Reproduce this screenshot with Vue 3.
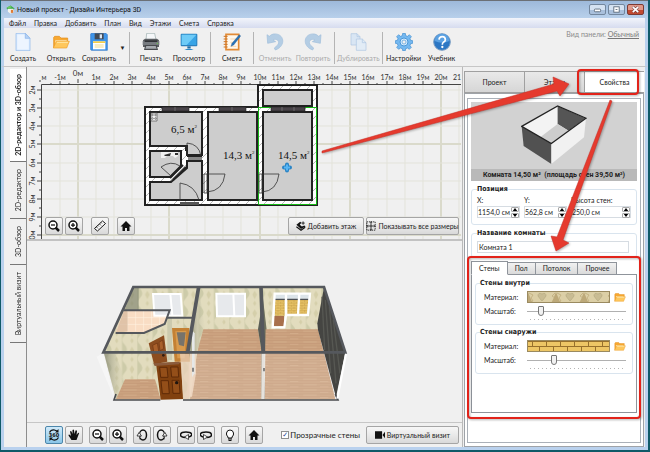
<template>
  <div class="window">
    <header class="titlebar">
      <svg class="app-icon" viewBox="0 0 24 24" aria-hidden="true">
        <path d="M1 8 12 1l11 8-4 4H6z" fill="#35a546" />
        <path d="M5 10h15v9l-8 4-7-5z" fill="#f4f4ee" />
        <path d="M13 13h6v8h-6z" fill="#e07b35" />
        <path d="M2 7l9-5 5 3-9 5z" fill="#6ccc63" />
      </svg>
      <h1>Новый проект - Дизайн Интерьера 3D</h1>
      <div class="window-controls">
        <button type="button" aria-label="Свернуть"><svg viewBox="0 0 16 10"><rect x="4.500" y="4.500" width="7" height="3" rx="1" fill="#fff" stroke="#5a6a7c" /></svg></button>
        <button type="button" aria-label="Развернуть"><svg viewBox="0 0 16 10"><rect x="5" y="2" width="6" height="6" fill="#fff" stroke="#5a6a7c" /><path d="M7 5h2" stroke="#5a6a7c" /></svg></button>
        <button type="button" class="close" aria-label="Закрыть"><svg viewBox="0 0 16 10"><path d="M5 2l6 6M11 2l-6 6" stroke="#6b3030" stroke-width="3" /><path d="M5 2l6 6M11 2l-6 6" stroke="#fff" stroke-width="2" /></svg></button>
      </div>
    </header>

    <nav class="menubar">
      <a v-for="item in menu" :key="item" href="#">{{ item }}</a>
    </nav>

    <div class="toolbar">
      <template v-for="(tool, i) in tools" :key="i">
        <span v-if="tool === '|'" class="separator"></span>
        <button v-else-if="tool === 'v'" type="button" class="drop" aria-label="Варианты сохранения">▼</button>
        <button v-else type="button" class="tool" :disabled="tool.off">
          <svg viewBox="0 0 54 54" v-html="icons[tool.icon]"></svg>
          <span>{{ tool.label }}</span>
        </button>
      </template>
      <p class="panel-mode">Вид панели: <a href="#">Обычный</a></p>
    </div>

    <div class="body">
      <div class="side-tabs">
        <button
          v-for="tab in sideTabs"
          :key="tab"
          type="button"
          :class="{ active: tab === view }"
          @click="view = tab"
        ><span>{{ tab }}</span></button>
      </div>

      <main class="work">
        <section class="plan">
          <svg class="plan-canvas">
            <defs>
              <pattern id="hatch" width="9" height="9" patternUnits="userSpaceOnUse">
                <rect width="9" height="9" fill="#fff" />
                <path d="M0 9L9 0" stroke="#999" stroke-width=".7" />
              </pattern>
            </defs>
            <g transform="translate(-27 -67)">
              <g v-for="n in 24" :key="'x' + n">
                <path :d="`M${xAt(n - 2)} 85V239`" :stroke="gridColor(n - 2)" :stroke-width="gridWidth(n - 2)" />
              </g>
              <g v-for="n in 9" :key="'y' + n">
                <path :d="`M42 ${yAt(n + 1)}H461`" :stroke="gridColor(n + 1)" :stroke-width="gridWidth(n + 1)" />
              </g>
              <path d="M41.500 239V84.500H461" fill="none" stroke="#444" />
              <g class="ruler">
                <text x="44" y="80" text-anchor="middle">м</text>
                <template v-for="n in 22" :key="'rx' + n">
                  <text v-if="n !== 2" :x="xAt(n - 2)" y="80" text-anchor="middle">{{ n - 2 }}м</text>
                  <text v-else class="zero" :x="xAt(0)" y="76" text-anchor="middle">0м</text>
                  <path :d="`M${xAt(n - 2)} ${n === 2 ? 79 : 81}v4M${xAt(n - 2.5)} 83v2`" stroke="#444" />
                </template>
                <text x="461" y="80" text-anchor="end">21</text>
                <template v-for="n in 9" :key="'ry' + n">
                  <text :transform="`translate(35 ${yAt(n + 1)}) rotate(-90)`" text-anchor="middle">{{ n === 9 ? '0' : n + 1 }}м</text>
                  <path :d="`M37 ${yAt(n + 1)}h4M39 ${yAt(n + 0.5)}h2`" stroke="#444" />
                </template>
              </g>

              <!-- walls -->
              <path d="M145 107H258V85H317V205H145z" fill="url(#hatch)" stroke="#222" stroke-width="2" />
              <g fill="#cdcdcd" stroke="#222" stroke-width="2">
                <path d="M150 112H202V155H187V146H150z" />
                <path d="M208 112H257V200H208z" />
                <path d="M263 112H312V200H263z" />
                <path d="M263 90H312V106H263z" />
                <path d="M150 151H181V166L170 177H150z" />
                <path d="M150 182H171L187 168V161H202V200H150z" />
              </g>
              <path d="M150 146H186V151M187 156H202" stroke="#222" stroke-width="2" fill="none" />
              <path d="M188 157H202V160H188z" fill="#888" />
              <path d="M170 178L183 165M173 180L186 167" stroke="#222" stroke-width="2" />
              <path d="M258.500 107.500H316.500V204.500H258.500z" fill="none" stroke="#16b816" />
              <path d="M162 107H189V111H162zM219 107H246V111H219zM271 107H305V111H271z" fill="#494449" stroke="#222" stroke-width=".6" />
              <path d="M175 107v4M232 107v4M282 107v4M294 107v4" stroke="#888" stroke-width=".6" />
              <path d="M180 202h19v3h-19z" fill="#555" />
              <g fill="#f1f1f1" stroke="#555" stroke-width=".7">
                <path d="M151 113h6v8h-6z" />
                <circle cx="152.500" cy="115" r=".8" /><circle cx="155.500" cy="115" r=".8" />
                <circle cx="152.500" cy="118.500" r=".8" /><circle cx="155.500" cy="118.500" r=".8" />
              </g>
              <path d="M161 152h17v4l-3 2-2-2h-6l-2 2h-4z" fill="#f2f2f2" />
              <path d="M164 155l7-2-1 3h-5zM175 153h3v2h-3z" fill="#333" />
              <g fill="none" stroke="#333" stroke-width=".8">
                <path d="M187 156V143Q199 144 201 156" />
                <path d="M171 176L161 167Q171 160 180 166" />
                <path d="M180 201V183Q195 185 199 200" />
                <path d="M204 174H225Q223 191 207 192M204 174V193H207V174" />
                <path d="M259 174H279Q277 191 262 192M259 174V193H262V174" />
              </g>
              <g class="area">
                <text x="171" y="133">6,5 м<tspan class="sup" dy="-5">2</tspan></text>
                <text x="223" y="159">14,3 м<tspan class="sup" dy="-5">2</tspan></text>
                <text x="278" y="159">14,5 м<tspan class="sup" dy="-5">2</tspan></text>
              </g>
              <path d="M284 167.500h6M287 164.500v6" stroke="#2a85c6" stroke-width="4" stroke-linecap="round" />
              <path d="M284 167.500h6M287 164.500v6" stroke="#58b6f4" stroke-width="2" />
            </g>
          </svg>
          <div class="plan-tools">
            <button type="button" class="sq" aria-label="Уменьшить"><svg viewBox="0 0 24 24" v-html="glyphs.minus"></svg></button>
            <button type="button" class="sq" aria-label="Увеличить"><svg viewBox="0 0 24 24" v-html="glyphs.plus"></svg></button>
            <button type="button" class="sq gap" aria-label="Линейка"><svg viewBox="0 0 24 24" v-html="glyphs.ruler"></svg></button>
            <button type="button" class="sq gap" aria-label="Показать весь план"><svg viewBox="0 0 24 24" v-html="glyphs.home"></svg></button>
            <span class="grow"></span>
            <button type="button" class="wide floor"><svg viewBox="0 0 24 24" v-html="glyphs.layers"></svg>Добавить этаж</button>
            <button type="button" class="wide"><svg viewBox="0 0 24 24" v-html="glyphs.sizes"></svg>Показывать все размеры</button>
          </div>
        </section>

        <section class="view3d">
          <svg viewBox="0 0 810 420" role="img" aria-label="3D-обзор">
            <defs>
              <pattern id="paper" width="46" height="56" patternUnits="userSpaceOnUse">
                <rect width="46" height="56" fill="#e2dcbe" />
                <path d="M12 0q14 14 0 28q-14 14 0 28h-8V0z" fill="#cdcba9" />
                <path d="M34 6l7 12-7 14-7-14zM34 36l5 8-5 8-5-8z" fill="#d5cfaa" />
              </pattern>
              <pattern id="floor" width="90" height="16" patternUnits="userSpaceOnUse">
                <rect width="90" height="16" fill="#cba27f" />
                <path d="M0 4h90M0 12h90" stroke="#bf9473" stroke-width="1.500" />
                <path d="M10 8h40M60 15h25" stroke="#d8b391" stroke-width="2" />
              </pattern>
              <pattern id="bricks3d" width="16" height="10" patternUnits="userSpaceOnUse">
                <rect width="16" height="10" fill="#e9c467" />
                <path d="M0 1h16M0 6h16M4 1v5M12 6v5" stroke="#b28a3a" />
              </pattern>
              <linearGradient id="shade" x1="0" x2="1">
                <stop offset="0" stop-color="#777b68" stop-opacity=".7" />
                <stop offset="1" stop-color="#d8d6b8" stop-opacity=".1" />
              </linearGradient>
            </defs>
            <path d="M40 250L75 390 20 260zM768 250L742 388 752 250z" fill="#f6f6f6" />
            <!-- back walls -->
            <path d="M130 50H702L684 180 730 388H78L42 250z" fill="url(#paper)" />
            <path d="M130 50L146 50V120H104z" fill="#777b68" opacity=".6" />
            <path d="M326 52L346 180 318 250V360L296 245z" fill="url(#shade)" />
            <path d="M515 52L530 180V245H515z" fill="#6f725f" />
            <path d="M42 250H76L105 330 78 388z" fill="url(#shade)" />
            <!-- floors -->
            <path d="M340 178H504L515 245V388H300L322 245z" fill="url(#floor)" />
            <path d="M527 178H684L736 388H522z" fill="url(#floor)" />
            <path d="M105 328H195L212 388H78z" fill="url(#floor)" />
            <path d="M318 248H520V388H296zM524 248H700L736 388H524z" fill="#fff" opacity=".14" />
            <path d="M504 178L515 245V388H524V200L515 110z" fill="#595d55" />
            <path d="M515 250h11l-2 138h-10z" fill="#f4f1ec" opacity=".9" />
            <path d="M300 250h18v60l-12 70h-16z" fill="#efd9c5" opacity=".9" />
            <path d="M306 180l8 10v120l-8 12z" fill="#e6e8e8" />
            <path d="M702 52L766 246 738 382 684 180 682 160z" fill="#454542" />
            <path d="M706 90L722 310M718 110L738 340M730 150L750 310M696 80L704 240" stroke="#575853" stroke-width="4" />
            <!-- bathroom -->
            <path d="M102 122H236L222 160 162 188H76z" fill="#f9ddc4" />
            <path d="M113 122V184M137 122V184M161 122V184M185 122V175M209 122V165M98 143H228M90 163H216" stroke="#fff0df" stroke-width="2" />
            <path d="M77 190L102 122L113 124V184z" fill="#d6b89d" opacity=".7" />
            <path d="M162 190L224 161 232 250H178z" fill="url(#paper)" />
            <path d="M232 145H246V270H232z" fill="#cccaae" />
            <!-- windows -->
            <g fill="#e7e9ec" stroke="#fff" stroke-width="6">
              <path d="M189 72H272L277 137H193zM241 72L247 137" />
              <path d="M379 71H465V139H381zM430 71L433 139" />
            </g>
            <path d="M555 85H584V137H555zM592 90H655L650 133H592z" fill="url(#bricks3d)" />
            <path d="M555 72H658V88H555z" fill="#dce4e9" />
            <path d="M555 88H655" stroke="#4b4f55" stroke-width="4" />
            <path d="M552 138H582V168H550z" fill="#a8704c" />
            <path d="M554 71H660L654 135H588L583 172H548zM588 71V137M628 71L624 135" fill="none" stroke="#fff" stroke-width="7" />
            <!-- doors -->
            <path d="M176 220L222 196 232 275 192 283z" fill="#8c4d1f" />
            <path d="M188 226L202 219 206 243 192 249zM207 217L218 210 221 236 210 242z" fill="#a9602a" stroke="#6f3512" stroke-width="2" />
            <circle cx="220" cy="256" r="4" fill="#2f1d12" />
            <path d="M246 174H298V275H254z" fill="#c48134" />
            <path d="M256 184L289 182 284 265H262z" fill="#d99b4d" />
            <path d="M260 187H287L282 229 267 225z" fill="#77736b" />
            <path d="M198 279L273 277 279 387 212 389z" fill="#81410f" />
            <path d="M190 280L268 275V283L194 288z" fill="#8b5b3b" />
            <g fill="#944f19" stroke="#5f2b08" stroke-width="3">
              <path d="M209 292h22l3 30h-22zM242 291h22l2 30h-21zM213 332h22l3 39h-21zM246 331h21l3 39h-21z" />
            </g>
            <circle cx="260" cy="338" r="5" fill="#1e1510" />
            <path d="M270 252H298V388H280z" fill="#ead2bb" opacity=".75" />
            <!-- wall tops -->
            <g fill="none" stroke="#55585d" stroke-width="8">
              <path d="M130 51H702L766 247H40z" />
              <path d="M326 51L293 247M513 51L520 247" stroke-width="11" />
              <path d="M102 121H239L224 162 162 189H77M233 143H306" stroke-width="6" />
            </g>
            <path d="M78 372L72 390H211M279 390H744L736 372" fill="none" stroke="#494b4e" stroke-width="5" />
            <path d="M768 252L742 386" stroke="#fff" stroke-width="6" />
            <path d="M309 293v12M522 294v10" stroke="#555" stroke-width="4" />
          </svg>
        </section>

        <div class="view-tools">
          <button type="button" class="sq on" aria-label="Вращать"><svg viewBox="0 0 24 24" v-html="glyphs.r360"></svg></button>
          <button type="button" class="sq" aria-label="Перемещать"><svg viewBox="0 0 24 24" v-html="glyphs.hand"></svg></button>
          <template v-for="g in viewGlyphs" :key="g.name">
            <button type="button" class="sq" :class="{ gap: g.gap }" :aria-label="g.label"><svg viewBox="0 0 24 24" v-html="glyphs[g.name]"></svg></button>
          </template>
          <span class="grow"></span>
          <label class="check"><input v-model="transparent" type="checkbox" />Прозрачные стены</label>
          <button type="button" class="wide"><svg viewBox="0 0 24 24" v-html="glyphs.camera"></svg>Виртуальный визит</button>
        </div>
      </main>

      <aside class="props">
        <div class="tabs">
          <button v-for="tab in panelTabs" :key="tab" type="button" :class="{ active: tab === panelTab }" @click="panelTab = tab">{{ tab }}</button>
        </div>
        <div class="frame">
          <div class="inner">
            <div class="preview">
              <svg viewBox="0 0 200 180" aria-hidden="true">
                <path d="M2 64L111 0 197 38 92 116z" fill="#f3f3f3" />
                <path d="M111 2L196 40 144 77 111 57z" fill="#555" />
                <path d="M111 57L144 77 92 114 59 96z" fill="#cdcdcd" />
                <path d="M2 64L92 116V178L8 123z" fill="#515151" />
                <path d="M92 116L197 38 191 97 92 178z" fill="#f1f1f1" />
                <path d="M2 64L111 2 197 39 92 116z" fill="none" stroke="#222" stroke-width="4" />
              </svg>
              <strong>Комната 14,50 м²&nbsp; (площадь стен 39,50 м²)</strong>
            </div>

            <fieldset class="position">
              <legend>Позиция</legend>
              <div class="fields">
                <div v-for="f in fields" :key="f.id" class="field">
                  <label :for="f.id">{{ f.label }}</label>
                  <div class="spin">
                    <input :id="f.id" v-model="f.value" type="text" />
                    <div class="steps">
                      <button type="button" aria-label="Больше"><svg viewBox="0 0 8 4"><path d="M4 0l3 4H1z" /></svg></button>
                      <button type="button" aria-label="Меньше"><svg viewBox="0 0 8 4"><path d="M4 4L1 0h6z" /></svg></button>
                    </div>
                  </div>
                </div>
              </div>
            </fieldset>

            <fieldset class="name">
              <legend><label for="room-name">Название комнаты</label></legend>
              <input id="room-name" v-model="roomName" type="text" />
            </fieldset>

            <div class="subtabs">
              <button v-for="tab in surfaceTabs" :key="tab" type="button" :class="{ active: tab === surface }" @click="surface = tab">{{ tab }}</button>
            </div>
            <div class="subpage">
              <fieldset v-for="wall in walls" :key="wall.id">
                <legend>{{ wall.title }}</legend>
                <div class="row">
                  <span class="caption">Материал:</span>
                  <svg class="swatch">
                    <defs>
                      <pattern id="damask" width="28" height="12" patternUnits="userSpaceOnUse">
                        <rect width="28" height="12" fill="#dccfa6" />
                        <path d="M1 1l4 2-2 3 2 3-4 2M27 1l-3 3 3 2-3 4 3 1" fill="none" stroke="#c5b384" />
                        <path d="M14 2q4-2 4 2q-2 3-4 5q-2-2-4-5q0-4 4-2" fill="#c9bc93" stroke="#b4a980" stroke-width=".7" />
                        <path d="M0 0l4 10h-4zM28 0l-4 10h4z" fill="#bda979" />
                      </pattern>
                      <pattern id="brick" width="14" height="12" patternUnits="userSpaceOnUse">
                        <rect width="14" height="12" fill="#edc665" />
                        <path d="M0 .5h14M0 5.500h14M0 10.500h14M4.500 1v5M11.500 6v5" stroke="#96702c" />
                      </pattern>
                    </defs>
                    <rect width="100%" height="100%" :fill="`url(#${wall.fill})`" />
                  </svg>
                  <button type="button" class="folder" aria-label="Выбрать материал">
                    <svg viewBox="3 8 50 40" v-html="icons.open"></svg>
                  </button>
                </div>
                <div class="row">
                  <label class="caption" :for="wall.id">Масштаб:</label>
                  <div class="slider">
                    <input :id="wall.id" v-model="wall.scale" type="range" min="0" max="100" />
                    <span class="ticks"></span>
                  </div>
                </div>
              </fieldset>
            </div>
          </div>
        </div>
      </aside>
    </div>

    <svg class="marks" viewBox="0 0 650 452" preserveAspectRatio="none" aria-hidden="true">
      <g fill="none" stroke="#e2231a" stroke-width="2">
        <rect x="578" y="70" width="60" height="24" rx="3" />
        <rect x="468" y="257" width="172" height="161" rx="3" />
      </g>
      <g fill="#e53a2e" stroke="#c92b22" stroke-width=".5">
        <path d="M322 151L554 84 553 77 569 84 560 96 557 91 322 153z" />
        <path d="M610 100L557 237 551 236 556 251 569 243 563 240 612 101z" />
      </g>
    </svg>
  </div>
</template>

<script setup>
import { ref } from 'vue'

const menu = ['Файл', 'Правка', 'Добавить', 'План', 'Вид', 'Этажи', 'Смета', 'Справка']

const tools = [
  { icon: 'page', label: 'Создать' },
  { icon: 'open', label: 'Открыть' },
  { icon: 'save', label: 'Сохранить' },
  'v',
  '|',
  { icon: 'print', label: 'Печать' },
  { icon: 'screen', label: 'Просмотр' },
  '|',
  { icon: 'estimate', label: 'Смета' },
  '|',
  { icon: 'undo', label: 'Отменить', off: true },
  { icon: 'redo', label: 'Повторить', off: true },
  '|',
  { icon: 'copy', label: 'Дублировать', off: true },
  '|',
  { icon: 'gear', label: 'Настройки' },
  { icon: 'help', label: 'Учебник' }
]

const sideTabs = ['2D-редактор и 3D-обзор', '2D-редактор', '3D-обзор', 'Виртуальный визит']
const view = ref(sideTabs[0])

const panelTabs = ['Проект', 'Этажи', 'Свойства']
const panelTab = ref('Свойства')

const surfaceTabs = ['Стены', 'Пол', 'Потолок', 'Прочее']
const surface = ref('Стены')

const fields = ref([
  { id: 'pos-x', label: 'X:', value: '1154,0 см' },
  { id: 'pos-y', label: 'Y:', value: '562,8 см' },
  { id: 'height', label: 'Высота стен:', value: '250,0 см' }
])
const roomName = ref('Комната 1')
const transparent = ref(true)

const walls = ref([
  { id: 'scale-in', title: 'Стены внутри', fill: 'damask', scale: 12 },
  { id: 'scale-out', title: 'Стены снаружи', fill: 'brick', scale: 26 }
])

const viewGlyphs = [
  { name: 'minus', label: 'Уменьшить', gap: true },
  { name: 'plus', label: 'Увеличить' },
  { name: 'tiltL', label: 'Наклонить назад', gap: true },
  { name: 'tiltR', label: 'Наклонить вперёд' },
  { name: 'turnL', label: 'Повернуть влево', gap: true },
  { name: 'turnR', label: 'Повернуть вправо' },
  { name: 'bulb', label: 'Освещение', gap: true },
  { name: 'home', label: 'Исходный вид', gap: true }
]

// metres to canvas pixels
const xAt = (m) => Math.round(78 + m * 18.15)
const yAt = (m) => Math.round(90 + (m - 2) * 18.15)
const gridColor = (m) => (m % 5 ? '#e3e3da' : '#dadacb')
const gridWidth = (m) => (m % 5 ? 1 : 2)

const icons = {
  page: '<path d="M6 1h28l14 15v37H6z" fill="#dcecff" stroke="#8db5e8" stroke-width="2"/><path d="M10 5h22v14h12v30H10z" fill="#edf5ff"/><path d="M34 1v15h14z" fill="#b5d2f6" stroke="#8db5e8" stroke-width="2"/>',
  open: '<path d="M5 44V13l3-3h14l5 5h20v10" fill="#f7a831" stroke="#e38b18" stroke-width="2"/><path d="M10 22h34v14H10z" fill="#fff3d0"/><path d="M4 45l9-20h39l-8 20z" fill="#ffc75c" stroke="#ee9d25" stroke-width="2"/><path d="M15 28h33" stroke="#ffe7a8" stroke-width="3"/>',
  save: '<path d="M2 4q0-3 3-3h43l4 4v47H5q-3 0-3-3z" fill="#3f95ea" stroke="#2c74c8" stroke-width="2"/><path d="M14 1h27v18H14z" fill="#444b55"/><path d="M29 4h7v12h-7z" fill="#dbe6f2"/><path d="M9 25h37v24H9z" fill="#fff"/><path d="M9 25h37v5H9z" fill="#f5cf48"/><path d="M14 36h27M14 42h27" stroke="#f1dc8a" stroke-width="3"/>',
  print: '<path d="M14 1h24l4 20H12z" fill="#f5f7f9" stroke="#9aa" stroke-width="2"/><path d="M3 22l6-5h36l6 5v20H3z" fill="#5a5d61"/><path d="M2 24h50v12H2z" fill="#777b80"/><path d="M8 22h38v5H8z" fill="#303236"/><path d="M10 36h34l4 15H6z" fill="#47494d"/><path d="M13 39h28l3 8H10z" fill="#a7abb0"/><circle cx="46" cy="31" r="2" fill="#6fd04c"/>',
  screen: '<rect x="2" y="2" width="50" height="38" rx="3" fill="#2b80bd"/><path d="M5 5h44v31H5z" fill="#38a4e6"/><path d="M5 5h44L20 36H5z" fill="#6ecbf7"/><path d="M22 40h10v6H22z" fill="#276fa3"/><path d="M13 51q14-9 28 0z" fill="#2b87c7"/>',
  estimate: '<path d="M9 4h38v46H9z" fill="#fff8ec" stroke="#e28a35" stroke-width="5"/><path d="M2 10h12M2 18h12M2 26h12M2 34h12M2 42h12" stroke="#cc7527" stroke-width="3"/><path d="M22 18h18M22 28h8M22 40h18" stroke="#f0c99c" stroke-width="2"/><path d="M49 5l4 4-21 27-8 4 3-9z" fill="#2973b8" stroke="#194f86"/>',
  undo: '<path d="M3 5l2 26 24-5-8-5c12-7 23 6 13 16l-9 8 3 6c34-12 27-52-6-48-5 1-9 4-12 7z" fill="#84b2dc" stroke="#5d94c8" stroke-width="2"/>',
  redo: '<path d="M51 5l-2 26-24-5 8-5c-12-7-23 6-13 16l9 8-3 6C-8 39-1-1 32 3c5 1 9 4 12 7z" fill="#84b2dc" stroke="#5d94c8" stroke-width="2"/>',
  copy: '<path d="M6 2h18l9 9v25H6z" fill="#c8dff8" stroke="#76a5d8" stroke-width="2"/><path d="M22 18h18l11 11v23H22z" fill="#d8e9fb" stroke="#76a5d8" stroke-width="2"/><path d="M24 2v9h9M40 18v11h11" fill="none" stroke="#76a5d8" stroke-width="2"/>',
  gear: '<path d="M23 1h8l1 7 6 2 5-5 6 6-4 6 2 5 6 1v8l-6 1-2 6 4 5-6 6-5-4-6 2-1 6h-8l-1-6-6-2-5 4-6-6 4-5-2-6-6-1v-8l6-1 2-5-4-6 6-6 5 5 6-2z" fill="#74b8f0" stroke="#3e8cd0" stroke-width="2"/><circle cx="27" cy="27" r="12" fill="#d7ecfd" stroke="#4a97d8" stroke-width="3"/><circle cx="27" cy="27" r="6" fill="#f0f0f0" stroke="#4a97d8" stroke-width="2"/>',
  help: '<circle cx="27" cy="27" r="25" fill="#2c77c4" stroke="#7b9ec3" stroke-width="3"/><path d="M5 24a22 22 0 0 1 44 0q-22 10-44 0z" fill="#5ba1e2"/><path d="M18 20q1-9 10-9t9 9q0 5-6 8-3 2-3 7" fill="none" stroke="#fff" stroke-width="5"/><circle cx="28" cy="42" r="3.500" fill="#fff"/>'
}

const loupe = '<circle cx="10" cy="10" r="8" fill="#fff" stroke="#111" stroke-width="3"/><path d="M15 15l7 7" stroke="#111" stroke-width="5"/>'
const glyphs = {
  minus: loupe + '<path d="M6 10h8" stroke="#111" stroke-width="2.500"/>',
  plus: loupe + '<path d="M6 10h8M10 6v8" stroke="#111" stroke-width="2.500"/>',
  ruler: '<path d="M1 17L17 2l6 5L7 22z" fill="#fff" stroke="#111" stroke-width="2"/><path d="M5 14l3 3M8 11l2 2M11 8l3 3M14 5l2 2" stroke="#111" stroke-width="1.500"/>',
  home: '<path d="M12 2l11 11h-4v9h-5v-6h-4v6H5v-9H1z" fill="#111"/>',
  layers: '<path d="M1 9l9-7 3 2-4 5 5 4 6-2 3 2-11 6z" fill="#111"/><path d="M1 14l11 8 10-7" fill="none" stroke="#111" stroke-width="3"/><path d="M17 1v8M13 5h8" stroke="#111" stroke-width="2"/>',
  sizes: '<path d="M2 2h20v20H2z" fill="none" stroke="#111" stroke-width="2" stroke-dasharray="3 2"/><path d="M12 1v22M1 12h22" stroke="#111" stroke-width="2"/><path d="M9 5l3-3 3 3M9 19l3 3 3-3M5 9l-3 3 3 3M19 9l3 3-3 3" fill="none" stroke="#111"/>',
  r360: '<path d="M3 7q3-6 10-5l5 2M21 17q-3 6-10 5l-5-2" fill="none" stroke="#111" stroke-width="2.500"/><path d="M21 0v7h-7zM3 24v-7h7z" fill="#111"/><text x="12" y="16" text-anchor="middle" font-family="DejaVu Sans Condensed, sans-serif" font-size="11" font-weight="bold" fill="#111">360</text>',
  hand: '<path d="M7 22l-6-9q0-3 3-1l2 2L4 5q2-2 3 0l2 5V2q2-2 3 0l1 8 2-7q2-1 3 1l-1 8 3-4q3-1 2 1l-5 13z" fill="#111"/>',
  tiltL: '<ellipse cx="14" cy="12" rx="7" ry="10" fill="none" stroke="#111" stroke-width="3"/><path d="M8 7q-3 6 1 11" fill="none" stroke="#fff" stroke-width="2"/><path d="M2 14h9l-5-7zM8 14v7" fill="#fff" stroke="#111" stroke-width="1.500"/>',
  tiltR: '<ellipse cx="10" cy="12" rx="7" ry="10" fill="none" stroke="#111" stroke-width="3"/><path d="M16 7q3 6-1 11" fill="none" stroke="#fff" stroke-width="2"/><path d="M22 14h-9l5-7zM16 14v7" fill="#fff" stroke="#111" stroke-width="1.500"/>',
  turnL: '<path d="M11 17c-14 0-13-11 1-11s14 8 6 10" fill="none" stroke="#111" stroke-width="3"/><path d="M17 11v10l-8-5z" fill="#fff" stroke="#111" stroke-width="1.500"/>',
  turnR: '<path d="M13 17c14 0 13-11-1-11s-14 8-6 10" fill="none" stroke="#111" stroke-width="3"/><path d="M7 11v10l8-5z" fill="#fff" stroke="#111" stroke-width="1.500"/>',
  bulb: '<path d="M8 16q-4-4-3-8 1-6 7-6t7 6q1 4-3 8v2H8z" fill="#fff" stroke="#111" stroke-width="2"/><path d="M8 20h8M9 23h6" stroke="#111" stroke-width="2"/>',
  camera: '<path d="M0 3h17v18H0zM18 12l6-8v16z" fill="#111"/>'
}
</script>

<style>
body {
  margin: 0;
}
</style>

<style scoped>
.window,
.window * {
  box-sizing: border-box;
}

.window {
  position: relative;
  display: flex;
  flex-direction: column;
  min-height: 100vh;
  padding: 0 2px 2px 1px;
  background: #0f5a68;
  color: #222;
  font: 7px/9px Lato, "Liberation Sans", sans-serif;
}

button,
input {
  margin: 0;
  padding: 0;
  border: 0;
  background: none;
  color: inherit;
  font: inherit;
}

svg {
  display: block;
}

.titlebar {
  display: flex;
  align-items: center;
  height: 18px;
  padding: 0 4px 0 5px;
  border-top: 1px solid #6b7076;
  background: linear-gradient(#9db9da, #b8d0eb);
}

.app-icon {
  width: 9px;
  height: 9px;
}

h1 {
  flex: 1;
  margin: 0 0 0 2px;
  color: #111;
  font: 7px/10px Roboto, "Liberation Sans", sans-serif;
}

.window-controls {
  display: flex;
  gap: 2px;
}

.window-controls button {
  width: 17px;
  height: 11px;
  border: 1px solid #73879e;
  border-radius: 2px;
  background: linear-gradient(#d5e2f1 50%, #a9c0dc 50%);
}

.window-controls svg {
  width: 100%;
  height: 9px;
}

.window-controls .close {
  border-color: #7c3a33;
  background: linear-gradient(#e0998a 50%, #c14a31 50%);
}

.menubar {
  display: flex;
  gap: 8px;
  height: 10px;
  padding: 0 5px;
  border-right: 3px solid #b9d1ee;
  border-left: 3px solid #b9d1ee;
  background: linear-gradient(#f2f5fb, #d6dcef);
  line-height: 10px;
}

.menubar a {
  color: #222;
  text-decoration: none;
}

.toolbar {
  display: flex;
  height: 39px;
  border-left: 3px solid #b9d1ee;
  border-right: 3px solid #b9d1ee;
  border-bottom: 1px solid #c6c6c6;
  background: #f0f0f0;
}

.tool {
  display: flex;
  flex-direction: column;
  align-items: center;
  min-width: 38px;
  padding-top: 5px;
  white-space: nowrap;
}

.tool svg {
  width: 18px;
  height: 18px;
  margin-bottom: 3px;
}

.tool:disabled {
  color: #aaa;
}

.tool:disabled svg {
  opacity: 0.55;
}

.drop {
  width: 9px;
  font-size: 6px;
}

.separator {
  width: 1px;
  margin: 4px 2px 2px;
  background: #b4b4b4;
}

.panel-mode {
  margin: 2px 6px 0 auto;
  color: #8a8a8a;
}

.panel-mode a {
  color: #777;
}

.body {
  flex: 1;
  display: flex;
  border: 3px solid #b9d1ee;
  border-top: 0;
  background: #f0f0f0;
}

.side-tabs {
  display: flex;
  flex-direction: column;
  width: 23px;
  padding: 2px 0 0 6px;
  border-right: 1px solid #8d8d8d;
}

.side-tabs button {
  display: flex;
  align-items: center;
  justify-content: center;
  padding: 7px 0;
  border-bottom: 1px solid #777;
}

.side-tabs span {
  writing-mode: vertical-rl;
  transform: rotate(180deg);
  white-space: nowrap;
}

.side-tabs .active {
  padding: 5px 0;
  background: #fff;
  font-weight: bold;
}

.work {
  flex: 1;
  display: flex;
  flex-direction: column;
  min-width: 0;
}

.plan {
  position: relative;
  height: 174px;
  border-bottom: 2px solid #c2c2c2;
}

.plan-canvas {
  width: 100%;
  height: 100%;
}

.ruler text {
  fill: #333;
}

.ruler .zero {
  font-size: 8px;
}

.area {
  font: 11px "Liberation Serif", serif;
  fill: #111;
}

.area .sup {
  font-size: 5px;
}

.plan-tools {
  position: absolute;
  right: 3px;
  bottom: 4px;
  left: 18px;
  display: flex;
  gap: 2px;
}

.grow {
  flex: 1;
}

.sq,
.wide {
  display: flex;
  align-items: center;
  justify-content: center;
  width: 18px;
  height: 18px;
  border: 1px solid #a5a5a5;
  border-radius: 2px;
  background: linear-gradient(#f7f7f7, #e9e9e9 50%, #d9d9d9);
}

.sq svg {
  width: 12px;
  height: 12px;
}

.sq.on {
  border-color: #4d87ab;
  background: linear-gradient(#d0eafa, #8ac6e8);
}

.plan-tools .gap {
  margin-left: 6px;
}

.wide {
  gap: 2px;
  width: 93px;
  white-space: nowrap;
}

.wide svg {
  flex: none;
  width: 10px;
  height: 10px;
}

.floor {
  width: 76px;
}

.view3d {
  flex: 1;
  padding: 29px 0 0 63px;
}

.view3d svg {
  width: 270px;
  max-width: 100%;
}

.view-tools {
  display: flex;
  align-items: center;
  gap: 2px;
  height: 25px;
  padding: 0 3px 0 18px;
  border-top: 1px solid #c6c6c6;
}

.view-tools .gap {
  margin-left: 4px;
}

.check {
  display: flex;
  align-items: center;
  gap: 1px;
  margin-right: 4px;
  font-size: 8px;
}

.check input {
  appearance: none;
  width: 8px;
  height: 8px;
  border: 1px solid #8e8f8f;
  background: #fff;
}

.check input:checked::before {
  content: "✓";
  display: block;
  color: #1c3f94;
  font: bold 7px/6px "DejaVu Sans", sans-serif;
}

.props {
  display: flex;
  flex-direction: column;
  width: 183px;
  padding: 4px 1px 0;
  border-left: 1px solid #b9b9b9;
}

.tabs {
  display: flex;
  height: 22px;
}

.tabs button {
  flex: 1;
  border: 1px solid #a0a0a0;
  border-right-width: 0;
  background: linear-gradient(#e9e9e9, #d6d6d6);
}

.tabs .active {
  background: #fff;
}

.frame {
  flex: 1;
  padding: 4px 2px 3px;
  border: 1px solid #9fa3a8;
  background: #fff;
}

.inner {
  height: 100%;
  padding: 3px;
  border: 1px solid #aab0b8;
}

.preview {
  background: #d2d2d2;
}

.preview svg {
  width: 66px;
  height: 67px;
  margin: 0 auto;
  padding: 3px 0 4px;
}

.preview strong {
  display: block;
  background: #b9b9b9;
  font-family: Roboto, "Liberation Sans", sans-serif;
  line-height: 12px;
  text-align: center;
  white-space: nowrap;
}

fieldset {
  min-width: 0;
  margin: 4px 0 0;
  padding: 0 5px 6px;
  border: 1px solid #d9e4ee;
  border-radius: 3px;
}

legend {
  padding: 0;
  font-family: "DejaVu Sans Condensed", "Liberation Sans", sans-serif;
  font-weight: bold;
}

.fields {
  display: flex;
  gap: 4px;
  padding-top: 1px;
}

.field {
  width: 43px;
}

.field:last-child {
  flex: 1;
}

.field label {
  display: block;
  line-height: 11px;
  white-space: nowrap;
}

.spin {
  display: flex;
  align-items: center;
  height: 12px;
  border: 1px solid #d6dce2;
  background: #fff;
}

.spin input {
  flex: 1;
  width: 0;
}

.steps {
  display: flex;
  flex-direction: column;
  gap: 1px;
  width: 8px;
}

.steps button {
  height: 5px;
  border: 1px solid #aaa;
  border-radius: 1px;
}

.steps svg {
  width: 100%;
  height: 3px;
}

.name {
  padding-top: 3px;
  padding-bottom: 4px;
}

.name input {
  display: block;
  width: 152px;
  height: 12px;
  padding-left: 1px;
  border: 1px solid #d6dce2;
}

.subtabs {
  display: flex;
  align-items: flex-end;
  margin-top: 3px;
}

.subtabs button {
  height: 13px;
  margin-bottom: -1px;
  padding: 0 7px;
  border: 1px solid #8f949b;
  border-left-width: 0;
  background: linear-gradient(#f1f1f1, #dadada);
}

.subtabs .active {
  height: 14px;
  border-bottom-color: #fff;
  border-left-width: 1px;
  background: #fff;
}

.subpage {
  height: 139px;
  padding: 1px 3px;
  border: 1px solid #8f949b;
}

.subpage fieldset {
  margin-top: 3px;
  padding: 2px 5px 6px 8px;
}

.subpage legend {
  margin-left: -4px;
}

.row {
  display: flex;
  align-items: center;
  height: 14px;
}

.caption {
  width: 43px;
}

.swatch {
  width: 83px;
  height: 12px;
  border: 1px solid #9a8a60;
}

.folder {
  margin-left: 4px;
}

.folder svg {
  width: 12px;
  height: 9px;
}

.slider {
  width: 99px;
  padding-top: 4px;
}

.slider input {
  display: block;
  appearance: none;
  width: 100%;
  height: 10px;
  background: linear-gradient(#b0b0b0, #b0b0b0) center / 100% 1px no-repeat;
}

.slider input::-webkit-slider-thumb {
  appearance: none;
  width: 6px;
  height: 10px;
  border: 1px solid #777;
  border-radius: 1px 1px 3px 3px;
  background: #f2f2f2;
}

.ticks {
  display: block;
  height: 1px;
  margin: 3px 3px 0;
  background: repeating-linear-gradient(90deg, #b5b5b5 0 1px, transparent 1px 4px);
}

.marks {
  position: absolute;
  inset: 0;
  width: 100%;
  height: 100%;
  pointer-events: none;
  filter: drop-shadow(1px 1px 1px rgba(0, 0, 0, 0.3));
}
</style>
